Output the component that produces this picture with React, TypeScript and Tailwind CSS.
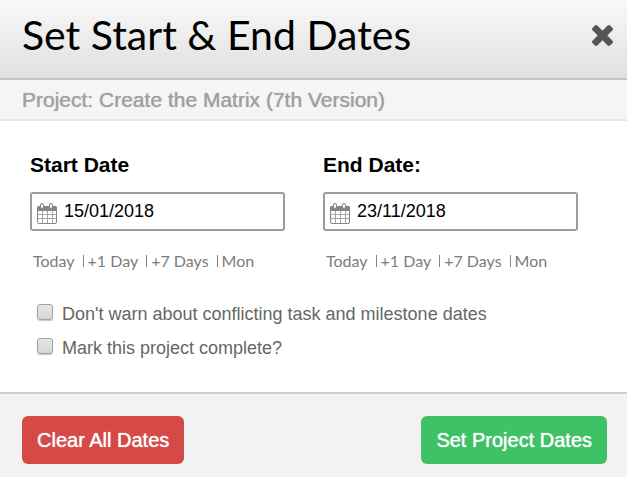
import { useState } from "react";

interface DateFieldProps {
  id: string;
  label: string;
  value: string;
  onChange: (value: string) => void;
}

const shortcuts = ["Today", "+1 Day", "+7 Days", "Mon"];

function CalendarIcon() {
  return (
    <svg className="absolute top-[10px] left-[7px] h-[22px] w-5" viewBox="0 0 20 22" fill="none" aria-hidden="true">
      <rect x="0.5" y="4.5" width="19" height="17" rx="1.5" fill="#fff" stroke="#858585" />
      <path d="M0 6a2 2 0 0 1 2-2h16a2 2 0 0 1 2 2v3H0z" fill="#858585" />
      <path
        d="M5.5 9v12M10.5 9v12M15.5 9v12M1 12.5h18M1 16.5h18"
        stroke="#a6a6a6"
      />
      <rect x="3.5" y="1.5" width="3" height="5" rx="1.5" fill="#fff" stroke="#858585" />
      <rect x="12.5" y="1.5" width="3" height="5" rx="1.5" fill="#fff" stroke="#858585" />
    </svg>
  );
}

function DateField({ id, label, value, onChange }: DateFieldProps) {
  return (
    <div className="min-w-0">
      <label htmlFor={id} className="block text-[21px] leading-6 font-bold text-black">
        {label}
      </label>
      <div className="relative mt-[15px]">
        <input
          id={id}
          type="text"
          value={value}
          onChange={(e) => onChange(e.target.value)}
          className="block h-[39px] w-full rounded-[3px] border-2 border-[#9c9c9c] bg-white pr-2 pl-8 text-lg text-black outline-none focus:border-[#6f6f6f]"
        />
        <CalendarIcon />
      </div>
      <div className="mt-5 flex pl-[3px] font-['Lato',sans-serif] text-base leading-5 whitespace-nowrap text-[#7c7c7c]">
        {shortcuts.map((item, index) => (
          <span key={item} className="flex items-center">
            {index > 0 && <span className="mr-1 ml-2 h-3 w-px bg-[#858585]" />}
            <button type="button" className="cursor-pointer hover:text-black">
              {item}
            </button>
          </span>
        ))}
      </div>
    </div>
  );
}

function CheckRow({ label }: { label: string }) {
  return (
    <label className="flex items-center gap-[9px] text-lg leading-[34px] text-[#666]">
      <input
        type="checkbox"
        className="mb-1 h-4 w-4 shrink-0 appearance-none rounded-[3px] border border-[#a3a3a3] bg-linear-to-b from-[#e6e6e6] to-[#d6d6d6] shadow-[0_1px_1px_#c4c4c4] checked:bg-none checked:bg-[#6b6b6b]"
      />
      {label}
    </label>
  );
}

export default function App() {
  const [start, setStart] = useState("15/01/2018");
  const [end, setEnd] = useState("23/11/2018");

  return (
    <div className="flex min-h-screen flex-col bg-white font-['Liberation_Sans',Arial,sans-serif]">
      <header className="flex items-center justify-between border-b-2 border-[#c3c3c3] bg-linear-to-b from-[#f8f8f8] to-[#e0e0e0] pt-[7px] pr-[14px] pb-[15px] pl-[22px]">
        <h1 className="font-['Lato',sans-serif] text-[41px] leading-[56px] text-black">
          Set Start &amp; End Dates
        </h1>
        <button type="button" aria-label="Close" className="cursor-pointer text-[#555]">
          <svg className="h-[21px] w-[21px]" viewBox="110 -18 1188 1188" fill="currentColor">
            <path d="M1298 938q0 40-28 68l-136 136q-28 28-68 28t-68-28l-294-294-294 294q-28 28-68 28t-68-28l-136-136q-28-28-28-68t28-68l294-294-294-294q-28-28-28-68t28-68l136-136q28-28 68-28t68 28l294 294 294-294q28-28 68-28t68 28l136 136q28 28 28 68t-28 68l-294 294 294 294q28 28 28 68z" />
          </svg>
        </button>
      </header>

      <h2 className="border-b-2 border-[#e8e8e8] bg-[#f5f5f5] px-[22px] py-1 text-[21px] leading-[31px] text-[#a0a0a0] [text-shadow:0_0_1px_#a0a0a0]">
        Project: Create the Matrix (7th Version)
      </h2>

      <main className="grow pt-8 pb-[27px] pl-[30px]">
        <div className="grid grid-cols-2 gap-[38px] pr-[49px]">
          <DateField id="start-date" label="Start Date" value={start} onChange={setStart} />
          <DateField id="end-date" label="End Date:" value={end} onChange={setEnd} />
        </div>
        <div className="mt-[26px] pl-[7px]">
          <CheckRow label="Don't warn about conflicting task and milestone dates" />
          <CheckRow label="Mark this project complete?" />
        </div>
      </main>

      <footer className="flex items-center justify-between border-t-2 border-[#cecece] bg-[#f2f2f2] pt-[22px] pr-5 pb-[13px] pl-[22px] text-xl text-white">
        <button
          type="button"
          className="h-12 cursor-pointer rounded-md bg-[#d54a47] px-[15px] [text-shadow:0_0_1px_#fff] hover:bg-[#c43f3c]"
        >
          Clear All Dates
        </button>
        <button
          type="button"
          className="h-12 cursor-pointer rounded-md bg-[#3fc266] px-[15px] [text-shadow:0_0_1px_#fff] hover:bg-[#35ad59]"
        >
          Set Project Dates
        </button>
      </footer>
    </div>
  );
}
